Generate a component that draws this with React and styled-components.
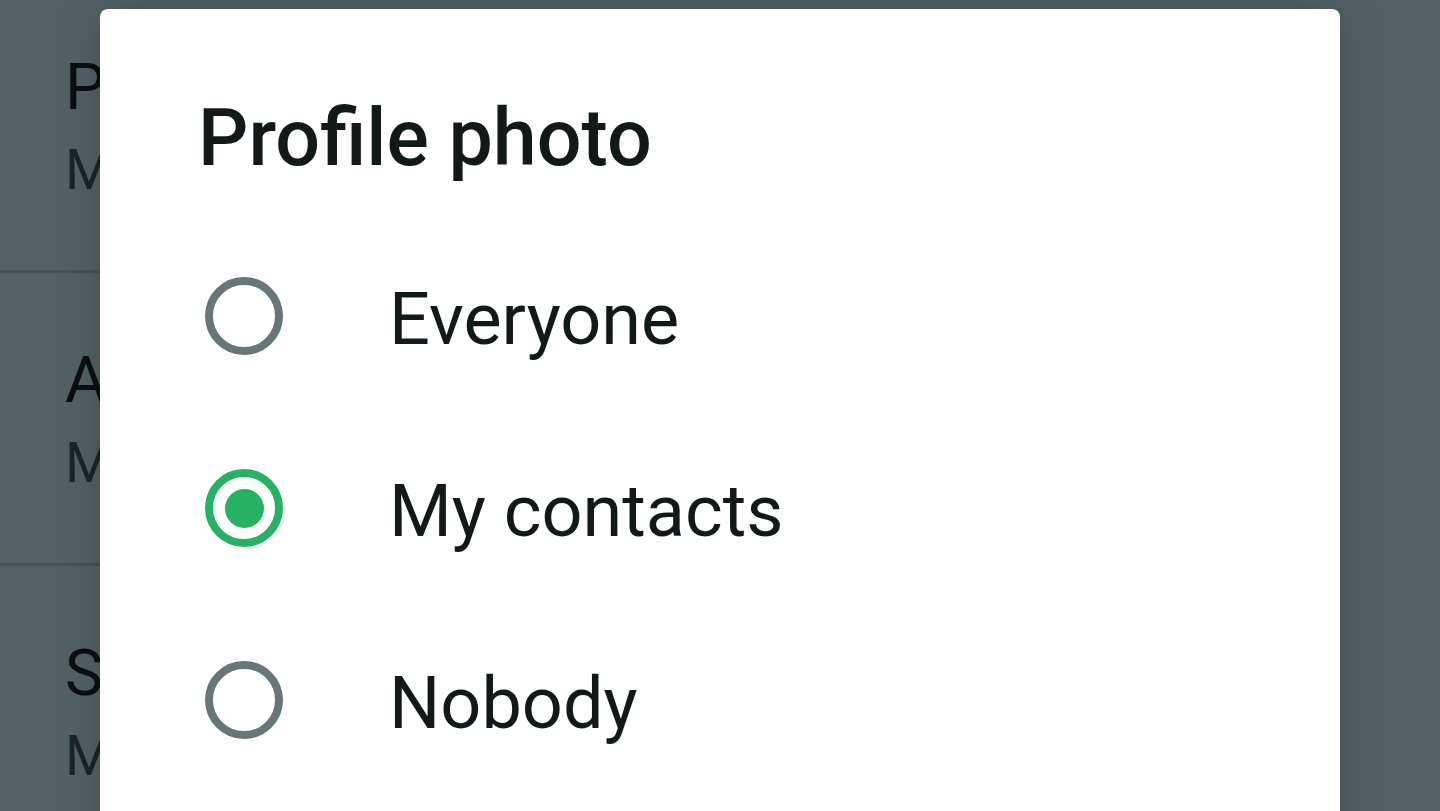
import React, { useState } from 'react';
import styled, { createGlobalStyle } from 'styled-components';

const colors = {
	scrim: '#526264',
	divider: '#455456',
	dimTitle: '#0b0f0f',
	dimSub: '#1b2426',
	text: '#121919',
	ring: '#667779',
	green: '#26b263'
};

const GlobalStyle = createGlobalStyle`
	html, body {
		margin: 0;
		padding: 0;
		height: 100%;
		overflow: hidden;
	}
	body {
		font-family: Roboto, 'Noto Sans', 'Liberation Sans', sans-serif;
		background: ${colors.scrim};
	}
`;

const settings = [
	{ title: 'Profile photo', value: 'My contacts' },
	{ title: 'About', value: 'My contacts' },
	{ title: 'Status', value: 'My contacts' }
];

const options = ['Everyone', 'My contacts', 'Nobody'];

export default function App() {
	const [selected, setSelected] = useState('My contacts');

	return (
		<Screen>
			<GlobalStyle />
			<SettingsList aria-hidden="true">
				{settings.map((s) => (
					<SettingRow key={s.title}>
						<SettingTitle>{s.title}</SettingTitle>
						<SettingValue>{s.value}</SettingValue>
					</SettingRow>
				))}
			</SettingsList>

			<Dialog role="dialog" aria-label="Profile photo">
				<DialogTitle>Profile photo</DialogTitle>
				<OptionList>
					{options.map((o) => (
						<Option key={o} onClick={() => setSelected(o)}>
							<RadioSlot>
								<Radio $checked={selected === o} />
							</RadioSlot>
							<OptionLabel>{o}</OptionLabel>
						</Option>
					))}
				</OptionList>
			</Dialog>
		</Screen>
	);
}

const Screen = styled.div`
	position: relative;
	width: 1440px;
	height: 811px;
	overflow: hidden;
	background: ${colors.scrim};
`;

// the list behind the dialog, only its left edge shows
const SettingsList = styled.div`
	display: flex;
	flex-direction: column;
	margin-top: -20px;
	width: 100px;
	overflow: hidden;
`;

const SettingRow = styled.div`
	display: flex;
	flex-direction: column;
	width: 1440px;
	padding: 70px 0 67px 65px;
	border-bottom: 3px solid ${colors.divider};
`;

const SettingTitle = styled.div`
	font-size: 64px;
	line-height: 76px;
	color: ${colors.dimTitle};
	white-space: nowrap;
`;

const SettingValue = styled.div`
	margin-top: 11px;
	font-size: 55px;
	line-height: 66px;
	color: ${colors.dimSub};
	white-space: nowrap;
`;

const Dialog = styled.div`
	position: absolute;
	left: 100px;
	top: 9px;
	width: 1240px;
	height: 900px;
	box-sizing: border-box;
	padding: 81px 0 0 98px;
	background: #ffffff;
	border-radius: 8px;
	box-shadow: 0 0 48px rgba(0, 0, 0, 0.22);
`;

const DialogTitle = styled.h2`
	margin: 0;
	font-size: 79px;
	line-height: 96px;
	font-weight: 500;
	color: ${colors.text};
`;

const OptionList = styled.div`
	display: flex;
	flex-direction: column;
	margin-top: 34px;
`;

const Option = styled.div`
	display: flex;
	align-items: center;
	height: 192px;
	cursor: pointer;
`;

const RadioSlot = styled.div`
	display: flex;
	justify-content: center;
	align-items: center;
	width: 92px;
	flex-shrink: 0;
`;

const Radio = styled.span`
	display: flex;
	justify-content: center;
	align-items: center;
	width: 78px;
	height: 78px;
	box-sizing: border-box;
	border-radius: 50%;
	border: 8px solid ${(p) => (p.$checked ? colors.green : colors.ring)};

	&::after {
		content: '';
		display: ${(p) => (p.$checked ? 'block' : 'none')};
		width: 39px;
		height: 39px;
		border-radius: 50%;
		background: ${colors.green};
	}
`;

const OptionLabel = styled.span`
	margin-left: 99px;
	padding-top: 8px;
	font-size: 72px;
	line-height: 84px;
	color: ${colors.text};
`;
